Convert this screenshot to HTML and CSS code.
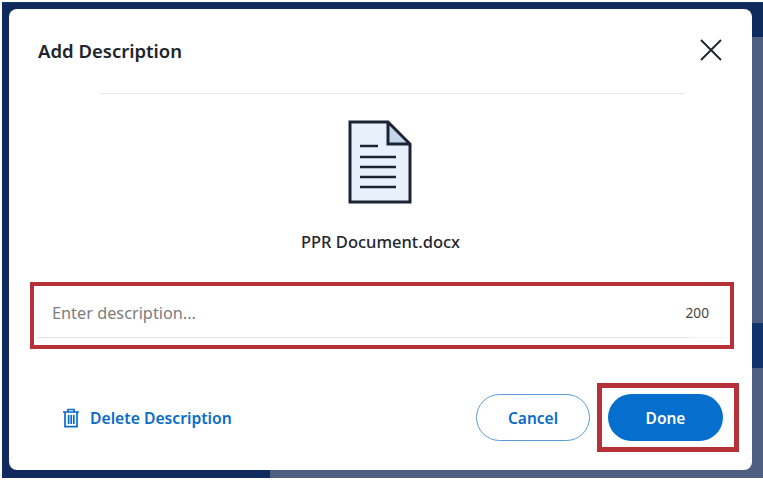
FILE: index.html
```html
<!DOCTYPE html>
<html lang="en">
<head>
<meta charset="utf-8">
<title>Add Description</title>
<link rel="stylesheet" href="styles.css">
</head>
<body>
<div class="backdrop">
  <div class="modal">
    <header class="modal-head">
      <h2 class="title">Add Description</h2>
      <button class="close" aria-label="Close">
        <svg width="24" height="24" viewBox="0 0 24 24"><path d="M2 2 L22 22 M22 2 L2 22" stroke="#1f2530" stroke-width="1.9" fill="none"/></svg>
      </button>
    </header>
    <div class="divider"></div>
    <div class="file">
      <svg class="doc" width="64" height="84" viewBox="0 0 64 84">
        <path d="M2 2 H40 L62 24 V82 H2 Z" fill="#e8f0fb"/>
        <path d="M40 2 L62 24 H40 Z" fill="#c5d6ea"/>
        <path d="M2 2 H40 L62 24 V82 H2 Z M40 2 V24 H62" fill="none" stroke="#1c2433" stroke-width="3"/>
        <path d="M12 26 H30 M12 37 H48 M12 47 H48 M12 57 H48 M12 67 H48" stroke="#1c2433" stroke-width="2.4" fill="none"/>
      </svg>
      <div class="filename">PPR Document.docx</div>
    </div>
    <div class="field-mark">
      <div class="field">
        <span class="placeholder">Enter description...</span>
        <span class="count">200</span>
      </div>
    </div>
    <footer class="actions">
      <a class="delete">
        <svg width="18" height="20" viewBox="0 0 18 20"><path d="M1 4 H17 M6 4 V1.5 H12 V4 M3 4 V18.6 H15 V4 M6.6 7 V16 M9.2 7 V16 M11.8 7 V16" stroke="#0a6cc9" stroke-width="1.7" fill="none"/></svg>
        <span>Delete Description</span>
      </a>
      <div class="buttons">
        <button class="btn btn-cancel">Cancel</button>
        <div class="done-mark"><button class="btn btn-done">Done</button></div>
      </div>
    </footer>
  </div>
</div>
</body>
</html>
```
FILE: styles.css
```css
* { box-sizing: border-box; }
html, body { margin: 0; height: 100%; }
body {
  background: #fff;
  font-family: "Noto Sans", "Open Sans", sans-serif;
  overflow: hidden;
}
.backdrop {
  width: 761px;
  height: 476px;
  margin: 2px 0 0 2px;
  padding: 7px 9px 6px 7px;
  background:
    linear-gradient(#0f3a6e, #0f3a6e) 0 0 / 100% 1px no-repeat,
    linear-gradient(#0f2a5c, #0f2a5c) 0 0 / 100% 35px no-repeat,
    linear-gradient(#10336b, #10336b) 100% 321px / 12px 45px no-repeat,
    linear-gradient(#0f2a5c, #0f2a5c) 0 100% / 268px 100% no-repeat,
    #4e5f82;
}
.modal {
  width: 743px;
  height: 461px;
  background: #fff;
  border-radius: 8px;
  display: flex;
  flex-direction: column;
}
.modal-head {
  height: 84px;
  padding: 0 29px;
  display: flex;
  align-items: flex-start;
  justify-content: space-between;
}
.title {
  margin: 29px 0 0;
  font-size: 18.5px;
  line-height: 26px;
  font-weight: 600;
  color: #20242c;
}
.close {
  margin: 29px 0 0 0;
  padding: 0;
  border: 0;
  background: none;
  width: 24px;
  height: 24px;
  display: flex;
}
.divider {
  height: 1px;
  margin: 0 67px 0 91px;
  background: #e9e9ea;
}
.file {
  display: flex;
  flex-direction: column;
  align-items: center;
  margin-top: 26px;
}
.doc { margin-left: -2px; }
.filename {
  margin-top: 28px;
  font-size: 16.5px;
  line-height: 20px;
  font-weight: 500;
  color: #23262d;
}
.field-mark {
  margin: 30px 18px 0 21px;
  height: 67px;
  border: 4.5px solid #b53137;
  padding: 0 0 7px 3px;
  display: flex;
}
.field {
  flex: 1;
  display: flex;
  align-items: center;
  justify-content: space-between;
  padding: 2px 21px 0 15px;
  border-bottom: 1px solid #dfe2e8;
  border-image: linear-gradient(to right, #dfe2e8 94%, #f5f5f7 94%) 1;
}
.placeholder { font-size: 16.3px; color: #7c7c7c; }
.count { font-size: 13.7px; color: #444; }
.actions {
  margin-top: 34px;
  padding: 0 13px 0 53px;
  display: flex;
  align-items: center;
  justify-content: space-between;
}
.delete {
  display: flex;
  align-items: center;
  gap: 10px;
  color: #0a6cc9;
  font-size: 15.7px;
  font-weight: 600;
}
.buttons { display: flex; align-items: center; gap: 7px; }
.btn {
  width: 115px;
  height: 47px;
  border-radius: 24px;
  font-family: inherit;
  font-size: 15.5px;
  font-weight: 600;
  padding: 0;
}
.btn-cancel { width: 114px; background: #fff; color: #0a6cc9; border: 1px solid #5b9bd8; }
.btn-done { background: #066fce; color: #fff; border: 0; }
.done-mark {
  width: 142px;
  height: 69px;
  border: 5px solid #b53137;
  padding: 6px 11px 0 6px;
}
```
